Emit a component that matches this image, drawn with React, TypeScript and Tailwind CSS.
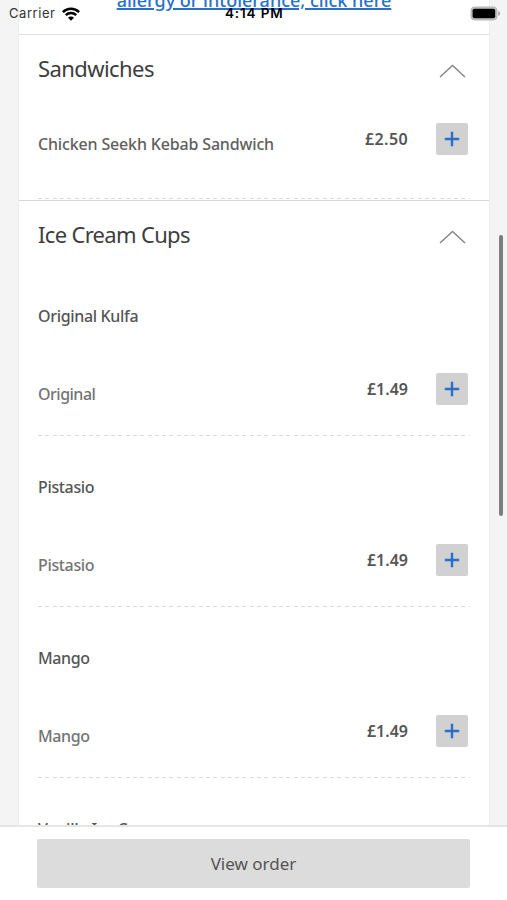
import React from "react";

const sans = "font-['Noto_Sans',sans-serif]";

function Chevron() {
  return (
    <svg className="mt-[7px]" width="28" height="16" viewBox="0 0 28 16" fill="none" stroke="#858585" strokeWidth="1.4">
      <path d="M2 14 14.5 2.5 27 14" />
    </svg>
  );
}

function SectionHeader({ title, spacing }: { title: string; spacing: string }) {
  return (
    <div className="flex h-[65px] items-center justify-between pr-[4px]">
      <h2 className={`text-[22px] leading-[30px] whitespace-nowrap text-[#3d3d3d] ${spacing}`}>{title}</h2>
      <Chevron />
    </div>
  );
}

function AddButton() {
  return (
    <button className="flex size-8 items-center justify-center rounded-[2px] bg-[#d1d1d1]">
      <svg width="16" height="16" viewBox="0 0 16 16" stroke="#2a6fc9" strokeWidth="2.4">
        <path d="M8 .8v14.4M.8 8h14.4" />
      </svg>
    </button>
  );
}

type PriceRowProps = { name: string; price: string; tone: string; spacing: string; priceSpacing: string };

function PriceRow({ name, price, tone, spacing, priceSpacing }: PriceRowProps) {
  return (
    <div className="flex h-8 items-center pr-[2px]">
      <span className={`relative top-[5px] flex-1 text-[16px] leading-6 font-medium whitespace-nowrap ${tone} ${spacing}`}>{name}</span>
      <span className={`mr-[28px] text-[16px] leading-6 font-semibold text-[#555] ${priceSpacing}`}>{price}</span>
      <AddButton />
    </div>
  );
}

function Divider() {
  return (
    <div className="h-px bg-[repeating-linear-gradient(90deg,#d9d9d9_0_4px,transparent_4px_7.3px)]" />
  );
}

const cups = [
  { title: "Original Kulfa", name: "Original", price: "£1.49", ts: "tracking-[-0.33px]", ns: "tracking-[-0.5px]" },
  { title: "Pistasio", name: "Pistasio", price: "£1.49", ts: "tracking-[-0.35px]", ns: "tracking-[-0.35px]" },
  { title: "Mango", name: "Mango", price: "£1.49", ts: "tracking-[-0.4px]", ns: "tracking-[-0.4px]" },
];

export default function App() {
  return (
    <div className={`relative flex h-[900px] w-[507px] flex-col overflow-hidden bg-[#f4f4f4] ${sans}`}>
      <main className="mr-[17px] ml-[18px] min-h-0 flex-1 overflow-hidden border-x border-[#ededed] bg-white">
        <div className="flex h-[34px] justify-center overflow-hidden">
          <a className="-mt-[12px] h-[24px] text-[18px] leading-6 font-medium whitespace-nowrap text-[#2a6fc9] underline decoration-[1.5px] underline-offset-1">
            allergy or intolerance, click here
          </a>
        </div>
        <section className="h-[166px] border-t border-[#e2e2e2] px-[19px]">
          <SectionHeader title="Sandwiches" spacing="tracking-[-0.57px]" />
          <div className="pt-[23px] pb-[43px]">
            <PriceRow
              name="Chicken Seekh Kebab Sandwich"
              price="£2.50"
              tone="text-[#606060]"
              spacing="tracking-[-0.16px]"
              priceSpacing="tracking-[0.4px]"
            />
          </div>
          <Divider />
        </section>
        <section className="border-t border-[#d8d8d8] px-[19px]">
          <SectionHeader title="Ice Cream Cups" spacing="tracking-[-0.68px]" />
          <div className="pt-[5px]">
            {cups.map((cup) => (
              <div key={cup.name} className="h-[171px]">
                <h3 className={`pt-[33px] text-[16px] leading-6 font-medium text-[#555] ${cup.ts}`}>{cup.title}</h3>
                <div className="pt-[45px] pb-[30px]">
                  <PriceRow name={cup.name} price={cup.price} tone="text-[#747474]" spacing={cup.ns} priceSpacing="tracking-[0px]" />
                </div>
                <Divider />
              </div>
            ))}
          </div>
          <h3 className="pt-[33px] text-[16px] leading-6 font-medium tracking-[-0.2px] text-[#555]">Vanilla Ice Cream</h3>
        </section>
      </main>
      <footer className="h-[75px] shrink-0 border-t-2 border-[#e6e6e6] bg-white px-[37px] pt-[12px]">
        <button className="h-[49px] w-full rounded-[2px] bg-[#dcdcdc] text-[17px] text-[#555]">View order</button>
      </footer>
      <div className="absolute inset-x-0 top-0 h-[27px] font-['Inter','Liberation_Sans',sans-serif] text-[13px] leading-[27px] text-black">
        <div className="flex items-center pl-[9px]">
          <span className="w-[53px] tracking-[0.55px] text-[#333]">Carrier</span>
          <svg width="18" height="14" viewBox="0 0 18 14" fill="none" stroke="#000" strokeWidth="2.5">
            <path d="M.9 5.1a11.5 11.5 0 0 1 16.2 0M3.8 8.2a7.4 7.4 0 0 1 10.4 0" />
            <path d="M9 13.8 6 10.8a4.2 4.2 0 0 1 6 0Z" fill="#000" stroke="none" />
          </svg>
        </div>
        <span className="absolute top-0 left-[225px] text-[13.5px] font-semibold tracking-[0.85px] whitespace-nowrap">4:14 PM</span>
        <svg className="absolute top-[6px] left-[470px]" width="31" height="15" viewBox="0 0 31 15">
          <rect x="1" y="1" width="26" height="13" rx="3.5" fill="#c4c4c4" stroke="#b4b4b4" strokeWidth="1" />
          <rect x="2.6" y="2.8" width="22.6" height="9.4" rx="1.8" fill="#000" />
          <path d="M28.2 5q2 .8 2 2.5t-2 2.5Z" fill="#aaa" />
        </svg>
      </div>
      <div className="absolute top-[235px] left-[499px] h-[281px] w-[4px] rounded-full bg-[#7d7d7d]" />
    </div>
  );
}
